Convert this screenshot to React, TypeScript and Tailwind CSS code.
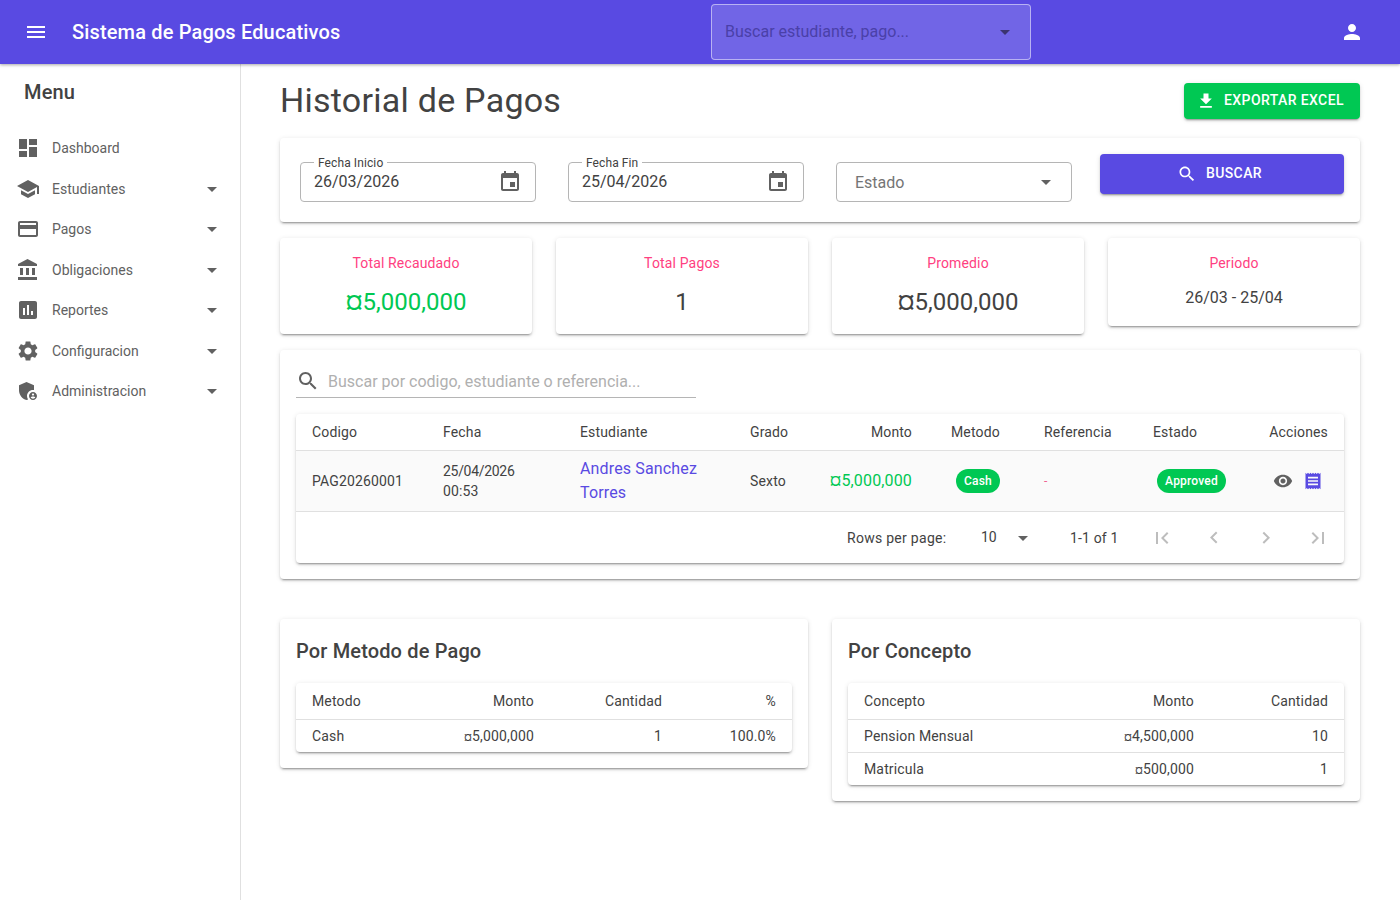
import React from 'react';

const PATHS = {
  menu: 'M3 18h18v-2H3v2zm0-5h18v-2H3v2zm0-7v2h18V6H3z',
  person: 'M12 12c2.21 0 4-1.79 4-4s-1.79-4-4-4-4 1.79-4 4 1.79 4 4 4zm0 2c-2.67 0-8 1.34-8 4v2h16v-2c0-2.66-5.33-4-8-4z',
  dashboard: 'M3 13h8V3H3v10zm0 8h8v-6H3v6zm10 0h8V11h-8v10zm0-18v6h8V3h-8z',
  school: 'M5 13.18v4L12 21l7-3.82v-4L12 17l-7-3.82zM12 3 1 9l11 6 9-4.91V17h2V9L12 3z',
  card: 'M20 4H4c-1.11 0-1.99.89-1.99 2L2 18c0 1.11.89 2 2 2h16c1.11 0 2-.89 2-2V6c0-1.11-.89-2-2-2zm0 14H4v-6h16v6zm0-10H4V6h16v2z',
  bank: 'M4 10v7h3v-7H4zm6 0v7h3v-7h-3zM2 22h19v-3H2v3zm14-12v7h3v-7h-3zm-4.5-9L2 6v2h19V6l-9.5-5z',
  report: 'M19 3H5c-1.1 0-2 .9-2 2v14c0 1.1.9 2 2 2h14c1.1 0 2-.9 2-2V5c0-1.1-.9-2-2-2zM9 17H7v-7h2v7zm4 0h-2V7h2v10zm4 0h-2v-4h2v4z',
  settings: 'M19.14 12.94c.04-.3.06-.61.06-.94 0-.32-.02-.64-.07-.94l2.03-1.58c.18-.14.23-.41.12-.61l-1.92-3.32c-.12-.22-.37-.29-.59-.22l-2.39.96c-.5-.38-1.03-.7-1.62-.94l-.36-2.54c-.04-.24-.24-.41-.48-.41h-3.84c-.24 0-.43.17-.47.41l-.36 2.54c-.59.24-1.13.57-1.62.94l-2.39-.96c-.22-.08-.47 0-.59.22L2.74 8.87c-.12.21-.08.47.12.61l2.03 1.58c-.05.3-.09.63-.09.94s.02.64.07.94l-2.03 1.58c-.18.14-.23.41-.12.61l1.92 3.32c.12.22.37.29.59.22l2.39-.96c.5.38 1.03.7 1.62.94l.36 2.54c.05.24.24.41.48.41h3.84c.24 0 .44-.17.47-.41l.36-2.54c.59-.24 1.13-.56 1.62-.94l2.39.96c.22.08.47 0 .59-.22l1.92-3.32c.12-.22.07-.47-.12-.61l-2.01-1.58zM12 15.6c-1.98 0-3.6-1.62-3.6-3.6s1.62-3.6 3.6-3.6 3.6 1.62 3.6 3.6-1.62 3.6-3.6 3.6z',
  admin: 'M17 11c.34 0 .67.04 1 .09V6.27L10.5 3 3 6.27v4.91c0 4.54 3.2 8.79 7.5 9.82.55-.13 1.08-.32 1.6-.55-.69-.98-1.1-2.17-1.1-3.45 0-3.31 2.69-6 6-6zM17 13c-2.21 0-4 1.79-4 4s1.79 4 4 4 4-1.79 4-4-1.79-4-4-4zm0 1.38c.62 0 1.12.51 1.12 1.12s-.51 1.12-1.12 1.12-1.12-.51-1.12-1.12.5-1.12 1.12-1.12zm0 5.37c-.93 0-1.74-.46-2.24-1.17.05-.72 1.51-1.08 2.24-1.08s2.19.36 2.24 1.08c-.5.71-1.31 1.17-2.24 1.17z',
  arrow: 'M7 10l5 5 5-5z',
  event: 'M17 12h-5v5h5v-5zM16 1v2H8V1H6v2H5c-1.11 0-1.99.9-1.99 2L3 19c0 1.1.89 2 2 2h14c1.1 0 2-.9 2-2V5c0-1.1-.9-2-2-2h-1V1h-2zm3 18H5V8h14v11z',
  download: 'M19 9h-4V3H9v6H5l7 7 7-7zM5 18v2h14v-2H5z',
  search: 'M15.5 14h-.79l-.28-.27C15.41 12.59 16 11.11 16 9.5 16 5.91 13.09 3 9.5 3S3 5.91 3 9.5 5.91 16 9.5 16c1.61 0 3.09-.59 4.23-1.57l.27.28v.79l5 4.99L20.49 19l-4.99-5zm-6 0C7.01 14 5 11.99 5 9.5S7.01 5 9.5 5 14 7.01 14 9.5 11.99 14 9.5 14z',
  eye: 'M12 4.5C7 4.5 2.73 7.61 1 12c1.73 4.39 6 7.5 11 7.5s9.27-3.11 11-7.5c-1.73-4.39-6-7.5-11-7.5zM12 17c-2.76 0-5-2.24-5-5s2.24-5 5-5 5 2.24 5 5-2.24 5-5 5zm0-8c-1.66 0-3 1.34-3 3s1.34 3 3 3 3-1.34 3-3-1.34-3-3-3z',
  receipt: 'M18 17H6v-2h12v2zm0-4H6v-2h12v2zm0-4H6V7h12v2zM3 22l1.5-1.5L6 22l1.5-1.5L9 22l1.5-1.5L12 22l1.5-1.5L15 22l1.5-1.5L18 22l1.5-1.5L21 22V2l-1.5 1.5L18 2l-1.5 1.5L15 2l-1.5 1.5L12 2l-1.5 1.5L9 2 7.5 3.5 6 2 4.5 3.5 3 2v20z',
  first: 'M18.41 16.59L13.82 12l4.59-4.59L17 6l-6 6 6 6zM6 6h2v12H6z',
  prev: 'M15.41 16.09l-4.58-4.59 4.58-4.59L14 5.5l-6 6 6 6z',
  next: 'M8.59 16.34l4.58-4.59-4.58-4.59L10 5.75l6 6-6 6z',
  last: 'M5.59 7.41L10.18 12l-4.59 4.59L7 18l6-6-6-6zM16 6h2v12h-2z',
};

type IconName = keyof typeof PATHS;

const Icon = ({ name, className = 'w-6 h-6' }: { name: IconName; className?: string }) => (
  <svg viewBox="0 0 24 24" fill="currentColor" className={`${className} shrink-0`}>
    <path d={PATHS[name]} />
  </svg>
);

const paper = 'bg-white rounded shadow-[0_3px_1px_-2px_rgba(0,0,0,0.2),0_2px_2px_0_rgba(0,0,0,0.14),0_1px_5px_0_rgba(0,0,0,0.12)]';

const NAV: { label: string; icon: IconName; arrow: boolean }[] = [
  { label: 'Dashboard', icon: 'dashboard', arrow: false },
  { label: 'Estudiantes', icon: 'school', arrow: true },
  { label: 'Pagos', icon: 'card', arrow: true },
  { label: 'Obligaciones', icon: 'bank', arrow: true },
  { label: 'Reportes', icon: 'report', arrow: true },
  { label: 'Configuracion', icon: 'settings', arrow: true },
  { label: 'Administracion', icon: 'admin', arrow: true },
];

const DateField = ({ label, value }: { label: string; value: string }) => (
  <div className="relative w-[236px] h-10 border border-[#b5b5b5] rounded flex items-center justify-between px-[13px]">
    <span className="absolute left-[13px] -top-[7px] bg-white px-1 text-xs leading-[15px] tracking-[0.1px] text-[#424242]">{label}</span>
    <span className="text-base text-[#424242] -mt-[1px]">{value}</span>
    <Icon name="event" className="w-6 h-6 text-[#616161] -mt-[1px]" />
  </div>
);

const Stat = ({ title, value, valueClass }: { title: string; value: string; valueClass: string }) => (
  <div className={`${paper} w-[252px] pt-[15px] pb-[14px] text-center self-start`}>
    <div className="text-sm leading-5 tracking-[0.15px] text-[#ff4081]">{title}</div>
    <div className={valueClass}>{value}</div>
  </div>
);

// en las tablas chicas el simbolo de moneda se ve mas pequeño
const Money = ({ value }: { value: string }) => (
  <>
    <span className="text-[11px]">¤</span>
    {value}
  </>
);

const th = 'h-[36px] px-4 text-sm font-normal tracking-[0.15px] text-[#424242] border-b border-[#e0e0e0]';
const td = 'px-4 text-sm tracking-[0.15px] text-[#424242]';

export default function App() {
  return (
    <div className="w-[1400px] h-[900px] overflow-hidden bg-white flex flex-col font-['Roboto',sans-serif] text-[#424242]">
      <header className="relative z-10 h-[64px] shrink-0 bg-[#594ae2] text-white flex items-center pl-6 pr-9 shadow-[0_1px_3px_rgba(0,0,0,0.35)]">
        <Icon name="menu" />
        <h1 className="ml-6 w-[268px] text-xl font-medium tracking-[0.0075em] whitespace-nowrap">Sistema de Pagos Educativos</h1>
        <div className="ml-[371px] w-[320px] h-[56px] rounded border border-white/50 bg-white/15 flex items-center justify-between px-[13px]">
          <span className="text-base text-[#4a40a8]">Buscar estudiante, pago...</span>
          <Icon name="arrow" className="w-6 h-6 text-[#3b3470]" />
        </div>
        <div className="ml-auto">
          <Icon name="person" />
        </div>
      </header>

      <div className="flex flex-1 min-h-0">
        <aside className="w-[241px] shrink-0 border-r border-[#e0e0e0] pt-[16px]">
          <div className="pl-6 text-xl font-medium leading-6 tracking-[0.0075em] h-[24px]">Menu</div>
          <nav className="mt-[24px]">
            {NAV.map((item) => (
              <div key={item.label} className="h-[40.5px] flex items-center px-4 text-[#616161]">
                <Icon name={item.icon} />
                <span className="ml-3 text-sm flex-1">{item.label}</span>
                {item.arrow && <Icon name="arrow" />}
              </div>
            ))}
          </nav>
        </aside>

        <main className="flex-1 min-w-0 pl-[39px] pr-10">
          <div className="flex items-start justify-between h-[74px]">
            <h2 className="text-[34px] leading-[68px] mt-[2px] tracking-[0.00735em] font-normal">Historial de Pagos</h2>
            <button className="mt-[19px] w-[176px] h-9 rounded bg-[#00c853] text-white text-sm font-medium tracking-[0.4px] flex items-center gap-2 pl-3 shadow-[0_3px_1px_-2px_rgba(0,0,0,0.2),0_2px_2px_0_rgba(0,0,0,0.14),0_1px_5px_0_rgba(0,0,0,0.12)]">
              <Icon name="download" className="w-5 h-5" />
              <span className="-mt-[2px]">EXPORTAR EXCEL</span>
            </button>
          </div>

          <section className={`${paper} h-[84px] flex items-start pl-5 pr-4`}>
            <div className="mt-6 flex gap-8">
              <DateField label="Fecha Inicio" value="26/03/2026" />
              <DateField label="Fecha Fin" value="25/04/2026" />
              <div className="w-[236px] h-10 border border-[#b5b5b5] rounded flex items-center justify-between pl-[18px] pr-[13px]">
                <span className="text-base text-[#757575] mt-px">Estado</span>
                <Icon name="arrow" className="w-6 h-6 text-[#616161]" />
              </div>
            </div>
            <button className="ml-7 mt-4 w-[244px] h-10 rounded bg-[#594ae2] text-white text-sm font-medium tracking-[0.4px] flex items-center justify-center gap-[9px] pr-[5px] shadow-[0_3px_1px_-2px_rgba(0,0,0,0.2),0_2px_2px_0_rgba(0,0,0,0.14),0_1px_5px_0_rgba(0,0,0,0.12)]">
              <Icon name="search" className="w-5 h-5" />
              <span className="-mt-[2px]">BUSCAR</span>
            </button>
          </section>

          <section className="mt-4 flex justify-between items-start">
            <Stat title="Total Recaudado" value="¤5,000,000" valueClass="mt-[11px] text-2xl leading-[36px] text-[#00c853]" />
            <Stat title="Total Pagos" value="1" valueClass="mt-[11px] text-2xl leading-[36px]" />
            <Stat title="Promedio" value="¤5,000,000" valueClass="mt-[11px] text-2xl leading-[36px]" />
            <Stat title="Periodo" value="26/03 - 25/04" valueClass="mt-[11px] text-base leading-[28px]" />
          </section>

          <section className={`${paper} mt-4 h-[229px] px-4 pt-[15px]`}>
            <div className="w-[400px] h-[33px] border-b border-[#b5b5b5] flex items-center">
              <Icon name="search" className="w-6 h-6 text-[#616161]" />
              <span className="ml-2 mt-px text-base text-[#b0b0b0]">Buscar por codigo, estudiante o referencia...</span>
            </div>
            <div className={`${paper} mt-4 h-[149px]`}>
              <table className="w-full table-fixed border-collapse">
                <colgroup>
                  <col className="w-[131px]" />
                  <col className="w-[137px]" />
                  <col className="w-[170px]" />
                  <col className="w-[81px]" />
                  <col className="w-[113px]" />
                  <col className="w-[100px]" />
                  <col className="w-[109px]" />
                  <col className="w-[109px]" />
                  <col />
                </colgroup>
                <thead>
                  <tr>
                    <th className={`${th} text-left`}>Codigo</th>
                    <th className={`${th} text-left`}>Fecha</th>
                    <th className={`${th} text-left`}>Estudiante</th>
                    <th className={`${th} text-left`}>Grado</th>
                    <th className={`${th} text-right`}>Monto</th>
                    <th className={`${th} text-left !pl-[23px] !pr-0`}>Metodo</th>
                    <th className={`${th} text-left whitespace-nowrap`}>Referencia</th>
                    <th className={`${th} text-left`}>Estado</th>
                    <th className={`${th} text-right !pl-0`}>Acciones</th>
                  </tr>
                </thead>
                <tbody>
                  <tr className="h-[61px] bg-[#fafafa] border-b border-[#e0e0e0]">
                    <td className={td}>PAG20260001</td>
                    <td className={`${td} leading-5`}><span className="tracking-[-0.3px]">25/04/2026</span><br />00:53</td>
                    <td className="pl-4 pr-2 text-base leading-6 tracking-[0.15px] text-[#594ae2]">Andres Sanchez Torres</td>
                    <td className={td}>Sexto</td>
                    <td className="pr-4 text-right text-base tracking-[0.15px] text-[#00c853]">¤5,000,000</td>
                    <td className="text-center">
                      <span className="inline-flex items-center h-6 px-2 rounded-full bg-[#00c853] text-white text-xs font-medium tracking-[0.2px]">Cash</span>
                    </td>
                    <td className="pl-4 text-xs text-[#f06292]">-</td>
                    <td className="text-center">
                      <span className="inline-flex items-center h-6 px-2 rounded-full bg-[#00c853] text-white text-xs font-medium tracking-[0.2px]">Approved</span>
                    </td>
                    <td>
                      <div className="flex items-center justify-end gap-[10px] pr-[21px]">
                        <Icon name="eye" className="w-5 h-5 text-[#616161]" />
                        <Icon name="receipt" className="w-5 h-5 text-[#594ae2]" />
                      </div>
                    </td>
                  </tr>
                </tbody>
              </table>
              <div className="h-[51px] flex items-center text-sm pl-[551px]">
                <span className="w-[99px] whitespace-nowrap tracking-[0.28px] mt-px">Rows per page:</span>
                <span className="ml-[35px] w-4">10</span>
                <Icon name="arrow" className="ml-[14px] mt-[2px] w-6 h-6 text-[#616161]" />
                <span className="ml-[35px] w-[48px] whitespace-nowrap tracking-[0.15px] mt-px">1-1 of 1</span>
                <div className="ml-[32px] mt-[2px] flex gap-7 text-[#bdbdbd]">
                  <Icon name="first" />
                  <Icon name="prev" />
                  <Icon name="next" />
                  <Icon name="last" />
                </div>
              </div>
            </div>
          </section>

          <section className="mt-10 flex justify-between items-start">
            <div className={`${paper} w-[528px] p-4`}>
              <h3 className="text-xl font-medium leading-8 tracking-[0.0075em]">Por Metodo de Pago</h3>
              <div className={`${paper} mt-4`}>
                <table className="w-full table-fixed border-collapse">
                  <colgroup>
                    <col className="w-[108px]" />
                    <col className="w-[146px]" />
                    <col className="w-[128px]" />
                    <col />
                  </colgroup>
                  <thead>
                    <tr>
                      <th className={`${th} text-left`}>Metodo</th>
                      <th className={`${th} text-right`}>Monto</th>
                      <th className={`${th} text-right`}>Cantidad</th>
                      <th className={`${th} text-right`}>%</th>
                    </tr>
                  </thead>
                  <tbody>
                    <tr className="h-[33px]">
                      <td className={td}>Cash</td>
                      <td className={`${td} text-right`}><Money value="5,000,000" /></td>
                      <td className={`${td} text-right`}>1</td>
                      <td className={`${td} text-right`}>100.0%</td>
                    </tr>
                  </tbody>
                </table>
              </div>
            </div>

            <div className={`${paper} w-[528px] p-4`}>
              <h3 className="text-xl font-medium leading-8 tracking-[0.0075em]">Por Concepto</h3>
              <div className={`${paper} mt-4`}>
                <table className="w-full table-fixed border-collapse">
                  <colgroup>
                    <col className="w-[230px]" />
                    <col className="w-[132px]" />
                    <col />
                  </colgroup>
                  <thead>
                    <tr>
                      <th className={`${th} text-left`}>Concepto</th>
                      <th className={`${th} text-right`}>Monto</th>
                      <th className={`${th} text-right`}>Cantidad</th>
                    </tr>
                  </thead>
                  <tbody>
                    <tr className="h-[33px] border-b border-[#e0e0e0]">
                      <td className={td}>Pension Mensual</td>
                      <td className={`${td} text-right`}><Money value="4,500,000" /></td>
                      <td className={`${td} text-right`}>10</td>
                    </tr>
                    <tr className="h-[33px]">
                      <td className={td}>Matricula</td>
                      <td className={`${td} text-right`}><Money value="500,000" /></td>
                      <td className={`${td} text-right`}>1</td>
                    </tr>
                  </tbody>
                </table>
              </div>
            </div>
          </section>
        </main>
      </div>
    </div>
  );
}
